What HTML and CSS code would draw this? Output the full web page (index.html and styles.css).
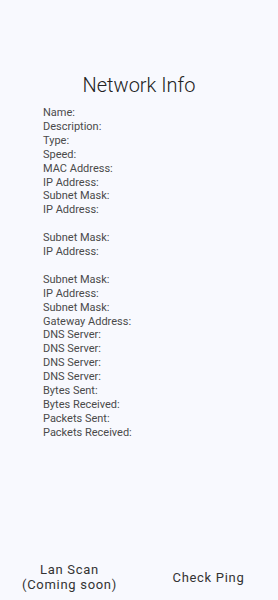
FILE: index.html
```html
<!DOCTYPE html>
<html lang="en">

<head>
    <meta charset="UTF-8">
    <meta name="viewport" content="width=device-width, initial-scale=1.0">
    <title>Network Info</title>
    <link rel="stylesheet" href="styles.css">
</head>

<body>
    <div class="page">
        <h1 class="title">Network Info</h1>
        <ul class="info">
            <li>Name:</li>
            <li>Description:</li>
            <li>Type:</li>
            <li>Speed:</li>
            <li>MAC Address:</li>
            <li>IP Address:</li>
            <li>Subnet Mask:</li>
            <li>IP Address:</li>
            <li class="blank"></li>
            <li>Subnet Mask:</li>
            <li>IP Address:</li>
            <li class="blank"></li>
            <li>Subnet Mask:</li>
            <li>IP Address:</li>
            <li>Subnet Mask:</li>
            <li>Gateway Address:</li>
            <li>DNS Server:</li>
            <li>DNS Server:</li>
            <li>DNS Server:</li>
            <li>DNS Server:</li>
            <li>Bytes Sent:</li>
            <li>Bytes Received:</li>
            <li>Packets Sent:</li>
            <li>Packets Received:</li>
        </ul>
        <div class="actions">
            <button class="btn">Lan Scan<br>(Coming soon)</button>
            <button class="btn">Check Ping</button>
        </div>
    </div>
</body>

</html>
```
FILE: styles.css
```css
* {
    margin: 0;
    padding: 0;
    box-sizing: border-box;
}

ul {
    list-style: none;
}

html,
body {
    height: 100%;
}

body {
    background-color: #f8f9fe;
    font-family: Roboto, "Noto Sans", sans-serif;
    color: #444;
}

.page {
    display: flex;
    flex-direction: column;
    height: 100%;
}

.title {
    margin-top: 72px;
    font-size: 20px;
    font-weight: 300;
    line-height: 26px;
    color: #222;
    text-align: center;
}

.info {
    margin-top: 8px;
    padding-left: 43px;
    font-size: 11px;
    line-height: 13.9px;
    color: #4a4a4a;
}

.info .blank {
    height: 13.9px;
}

.actions {
    margin-top: auto;
    margin-bottom: 2px;
    display: flex;
    align-items: center;
}

.btn {
    flex: 1;
    padding: 6px 0;
    border: none;
    background: none;
    font-family: Roboto, "Noto Sans", sans-serif;
    font-size: 13px;
    line-height: 15px;
    letter-spacing: 0.7px;
    color: #333;
}
```
